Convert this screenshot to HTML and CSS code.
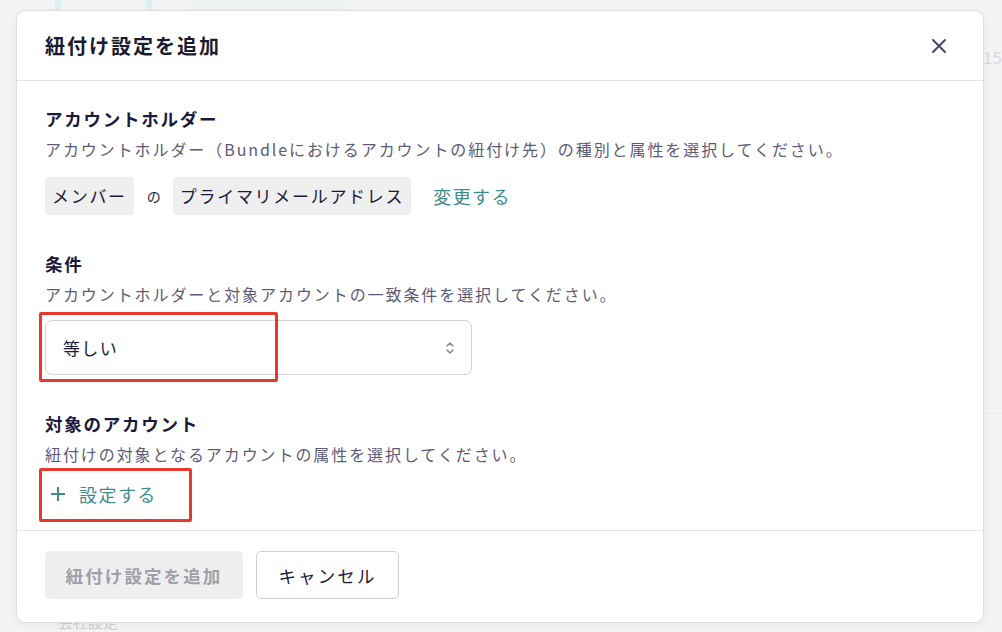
FILE: index.html
```html
<!doctype html>
<html>
    <head>
        <link rel="stylesheet" href="styles.css">
    </head>
    <body>
        <!-- page behind the dialog -->
        <div class="backdrop">
            <div class="bg-logo"></div>
            <div class="bg-pill"></div>
            <div class="bg-num">15</div>
            <div class="bg-rule"></div>
            <div class="bg-text">会社設定</div>
        </div>

        <div class="modal">
            <div class="modal-header">
                <h1 class="modal-title">紐付け設定を追加</h1>
                <button class="close-btn" aria-label="閉じる">
                    <svg width="16" height="16" viewBox="0 0 16 16">
                        <path d="M2 2 L14 14 M14 2 L2 14" stroke="#48466a" stroke-width="2" stroke-linecap="round" />
                    </svg>
                </button>
            </div>

            <div class="modal-body">
                <section class="field">
                    <h2 class="field-title">アカウントホルダー</h2>
                    <p class="field-desc">アカウントホルダー（Bundleにおけるアカウントの紐付け先）の種別と属性を選択してください。</p>
                    <div class="holder-row">
                        <span class="tag">メンバー</span>
                        <span class="joiner">の</span>
                        <span class="tag">プライマリメールアドレス</span>
                        <a class="link change-link">変更する</a>
                    </div>
                </section>

                <section class="field">
                    <h2 class="field-title">条件</h2>
                    <p class="field-desc">アカウントホルダーと対象アカウントの一致条件を選択してください。</p>
                    <div class="select-wrap">
                        <div class="select">
                            <span>等しい</span>
                            <svg class="select-arrows" width="10" height="16" viewBox="0 0 10 16">
                                <path d="M2 6 L5 3 L8 6 M2 10 L5 13 L8 10" fill="none" stroke="#8a8a96" stroke-width="1.5" stroke-linecap="round" stroke-linejoin="round" />
                            </svg>
                        </div>
                        <div class="mark mark-select"></div>
                    </div>
                </section>

                <section class="field">
                    <h2 class="field-title">対象のアカウント</h2>
                    <p class="field-desc">紐付けの対象となるアカウントの属性を選択してください。</p>
                    <div class="add-wrap">
                        <a class="link add-link">
                            <svg width="16" height="16" viewBox="0 0 16 16">
                                <path d="M8 1 V15 M1 8 H15" stroke="#3f8b8b" stroke-width="2" />
                            </svg>
                            設定する
                        </a>
                        <div class="mark mark-add"></div>
                    </div>
                </section>
            </div>

            <div class="modal-footer">
                <button class="btn btn-primary" disabled>紐付け設定を追加</button>
                <button class="btn btn-secondary">キャンセル</button>
            </div>
        </div>
    </body>
</html>
```

FILE: styles.css
```css
html {
    margin: 0;
    width: 100%;
    height: 100%;
}
body {
    margin: 0;
    padding: 10px 0 0 16px;
    min-height: 100%;
    box-sizing: border-box;
    background: #f4f4f5;
    font-family: "Noto Sans CJK JP", "Noto Sans", sans-serif;
    color: #1b1a3c;
    position: relative;
    overflow: hidden;
}

/* faint page content behind the dialog */
.backdrop .bg-logo {
    position: absolute;
    left: 55px;
    top: -30px;
    width: 85px;
    height: 40px;
    border: 6px solid #dcf0f2;
    border-radius: 8px;
}
.backdrop .bg-pill {
    position: absolute;
    left: 185px;
    top: -10px;
    width: 165px;
    height: 20px;
    background: #edf4f1;
    border-radius: 8px;
}
.backdrop .bg-num {
    position: absolute;
    left: 983px;
    top: 44px;
    font-size: 17px;
    color: #d8d8dc;
}
.backdrop .bg-rule {
    position: absolute;
    left: 984px;
    right: 0;
    top: 413px;
    border-top: 1px solid #ececef;
}
.backdrop .bg-text {
    position: absolute;
    left: 58px;
    top: 612px;
    font-size: 15px;
    line-height: 20px;
    color: #d0d0d4;
}

.modal {
    position: relative;
    width: 966px;
    background: #fff;
    border: 1px solid #dddde0;
    border-radius: 9px;
    box-shadow: 0 2px 10px rgba(0, 0, 0, 0.06);
}

.modal-header {
    height: 69px;
    display: flex;
    align-items: center;
    justify-content: space-between;
    padding: 0 36px 0 28px;
    border-bottom: 1px solid #e4e3ea;
}
.modal-title {
    margin: 0;
    font-size: 20px;
    font-weight: 700;
    letter-spacing: 0.1em;
    color: #1b1a2e;
}
.close-btn {
    border: none;
    background: none;
    padding: 0;
    width: 16px;
    height: 16px;
    display: flex;
}

.modal-body {
    padding: 23px 28px 21px;
}
.field + .field {
    margin-top: 34px;
}
.field-title {
    margin: 0;
    font-size: 17.5px;
    line-height: 30px;
    font-weight: 700;
    letter-spacing: 0.1em;
    color: #1b1a3c;
}
.field-desc {
    margin: 0;
    font-size: 16px;
    line-height: 30px;
    letter-spacing: 0.12em;
    color: #5d5b78;
}

.holder-row {
    margin-top: 13px;
    display: flex;
    align-items: center;
}
.tag {
    background: #efeff0;
    border-radius: 3px;
    padding: 0 7px;
    height: 38px;
    line-height: 38px;
    font-size: 17px;
    letter-spacing: 0.1em;
    color: #1b1a3c;
}
.joiner {
    font-size: 14px;
    color: #1b1a3c;
    margin: 0 12px 0 13px;
}
.link {
    color: #3f8b8b;
    font-size: 18px;
    letter-spacing: 0.08em;
    cursor: pointer;
}
.change-link {
    margin-left: 22px;
}

.select-wrap,
.add-wrap {
    position: relative;
    margin-top: 10px;
}
.select-wrap {
    margin-top: 11px;
}
.select {
    width: 427px;
    height: 55px;
    box-sizing: border-box;
    border: 1px solid #d4d4d8;
    border-radius: 7px;
    display: flex;
    align-items: center;
    justify-content: space-between;
    padding: 0 16px 0 17px;
    font-size: 17px;
    letter-spacing: 0.08em;
    color: #1b1a3c;
}
.select-arrows {
    display: block;
}

.add-link {
    display: flex;
    align-items: center;
    gap: 13px;
    height: 30px;
    padding-left: 5px;
}
.add-link svg {
    display: block;
}

/* red annotation boxes drawn over the screenshot */
.mark {
    position: absolute;
    border: 3px solid #e63a2e;
    border-radius: 2px;
}
.mark-select {
    left: -6px;
    top: -8px;
    width: 233px;
    height: 64px;
}
.mark-add {
    left: -6px;
    top: -11px;
    width: 147px;
    height: 48px;
}

.modal-footer {
    border-top: 1px solid #e4e3ea;
    padding: 20px 28px 23px;
    display: flex;
    gap: 13px;
}
.btn {
    height: 48px;
    border-radius: 5px;
    font-family: "Noto Sans CJK JP", "Noto Sans", sans-serif;
    font-size: 17.5px;
    letter-spacing: 0.12em;
    padding: 0 20px;
}
.btn-primary {
    width: 198px;
    background: #efeff0;
    border: none;
    color: #a0a0a6;
    font-weight: 700;
}
.btn-secondary {
    width: 143px;
    background: #fff;
    border: 1px solid #cfcfd4;
    color: #1b1a3c;
}
```
